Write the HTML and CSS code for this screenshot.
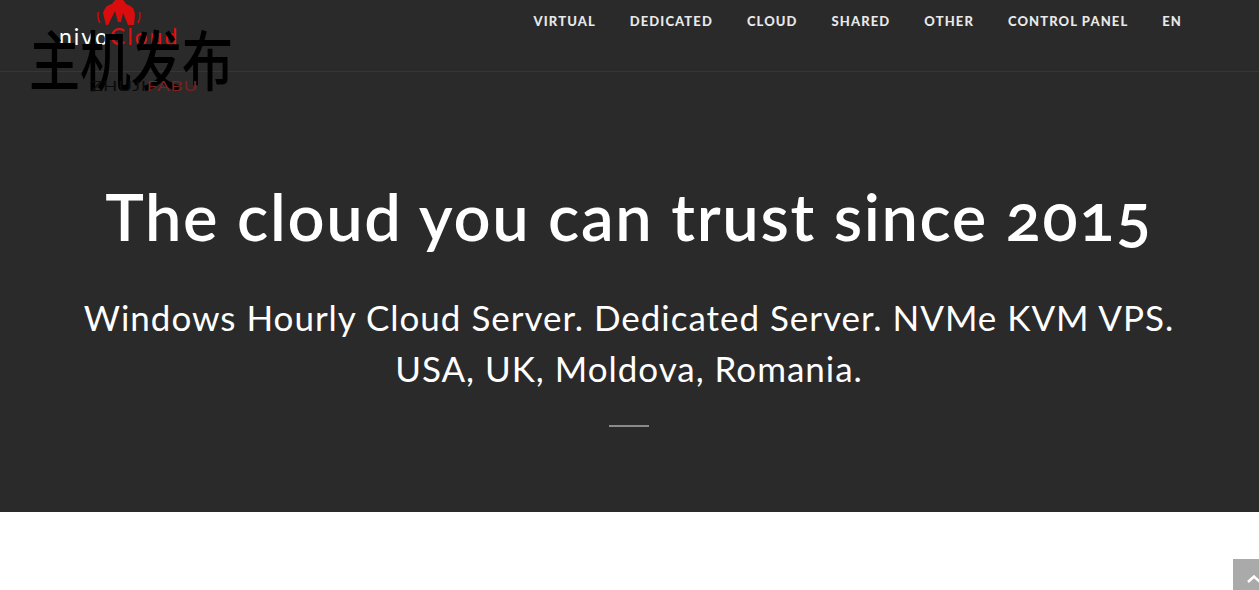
FILE: index.html
```html
<!DOCTYPE html>
<html lang="en">
<head>
<meta charset="utf-8">
<title>The cloud you can trust since 2015</title>
<link rel="stylesheet" href="styles.css">
</head>
<body>
<section class="hero">
  <header class="topbar">
    <a class="logo" href="#">
      <svg class="logo-cloud" viewBox="0 0 44 26" width="44" height="26" aria-hidden="true">
        <path d="M9 25 L6 13 Q8 5 15 4 Q18 -2 23 0 Q26 -2 29 4 Q37 6 38 14 L37 25 L31 25 L26 13 L24 22 L21 22 L18 11 L11 25 Z" fill="#d90d0d"/>
        <path d="M1.5 12 Q0 18 3 23 M42.5 12 Q44 18 41 23" fill="none" stroke="#c90d0d" stroke-width="1.5"/>
      </svg>
      <span class="logo-brand">nivo<span class="logo-red">Cloud</span></span>
      <span class="logo-cn">主机发布</span>
      <span class="logo-latin">ZHUJI<span class="logo-darkred">FABU</span></span>
    </a>
    <nav class="nav">
      <a href="#">Virtual</a>
      <a href="#">Dedicated</a>
      <a href="#">Cloud</a>
      <a href="#">Shared</a>
      <a href="#">Other</a>
      <a href="#">Control Panel</a>
      <a href="#">EN</a>
    </nav>
  </header>
  <div class="hero-body">
    <h1>The cloud you can trust since 2015</h1>
    <p>Windows Hourly Cloud Server. Dedicated Server. NVMe KVM VPS.<br>USA, UK, Moldova, Romania.</p>
    <hr class="divider">
  </div>
</section>
<a class="to-top" href="#" aria-label="Back to top">
  <svg viewBox="0 0 14 8" width="14" height="8" aria-hidden="true"><path d="M1 7 L7 1.5 L13 7" fill="none" stroke="#fff" stroke-width="2.5"/></svg>
</a>
</body>
</html>
```
FILE: styles.css
```css
* { box-sizing: border-box; }
html, body { margin: 0; height: 590px; overflow: hidden; background: #fff; }
body { font-family: "Lato", "Liberation Sans", sans-serif; }
.hero { background: #2a2a2a; height: 512px; color: #fff; }
.topbar {
  position: relative;
  height: 72px;
  border-bottom: 1px solid #363636;
  display: flex;
  justify-content: flex-end;
}
.nav { display: flex; gap: 34px; padding: 14px 77px 0 0; }
.nav a {
  color: #e8e8e8;
  font-size: 13px;
  line-height: 15px;
  font-weight: 900;
  letter-spacing: 1.1px;
  text-transform: uppercase;
  text-decoration: none;
}
.logo { position: absolute; left: 0; top: 0; width: 260px; height: 100px; text-decoration: none; overflow: hidden; }
.logo-cloud { position: absolute; left: 97px; top: 0; }
.logo-brand {
  position: absolute; left: 59px; top: 24px;
  font-size: 23px; line-height: 24px; color: #fff; letter-spacing: 2px;
}
.logo-red { color: #e01010; }
.logo-cn {
  position: absolute; left: 29px; top: 27px;
  font-family: "Noto Sans CJK SC", sans-serif;
  font-size: 51px; line-height: 60px; font-weight: 500; color: #000; white-space: nowrap;
  transform: scaleY(1.28);
}
.logo-latin {
  position: absolute; left: 91px; top: 79px;
  font-size: 14px; line-height: 14px; font-weight: 400; color: #0c0c0c; letter-spacing: 0.5px;
  transform: scaleX(1.35); transform-origin: left;
}
.logo-darkred { color: #7c2020; }
.hero-body { text-align: center; padding: 0 1px 0 0; }
h1 {
  margin: 104px 0 0;
  font-size: 65px;
  line-height: 80px;
  font-weight: 600;
  letter-spacing: 1.65px;
  color: #fff;
  font-variant-numeric: oldstyle-nums;
}
p {
  margin: 36px 0 0;
  font-size: 35px;
  line-height: 51px;
  font-weight: 400;
  letter-spacing: 0.98px;
  color: #fff;
}
.divider { width: 40px; height: 2px; margin: 31px auto 0; border: 0; background: #8a8a8a; }
.to-top {
  position: absolute; left: 1233px; top: 559px; width: 26px; height: 31px;
  background: #aaa; display: flex; justify-content: flex-end; align-items: flex-start; padding-top: 16px;
  overflow: hidden;
}
.to-top svg { flex: none; margin-right: -2px; }
```
